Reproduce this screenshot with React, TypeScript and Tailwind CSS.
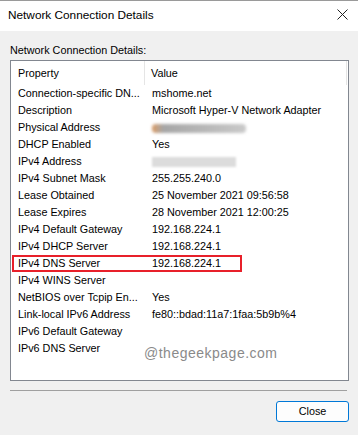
import React from 'react';

const rows: [string, string][] = [
  ['Connection-specific DN...', 'mshome.net'],
  ['Description', 'Microsoft Hyper-V Network Adapter'],
  ['Physical Address', '#blur1'],
  ['DHCP Enabled', 'Yes'],
  ['IPv4 Address', '#blur2'],
  ['IPv4 Subnet Mask', '255.255.240.0'],
  ['Lease Obtained', '25 November 2021 09:56:58'],
  ['Lease Expires', '28 November 2021 12:00:25'],
  ['IPv4 Default Gateway', '192.168.224.1'],
  ['IPv4 DHCP Server', '192.168.224.1'],
  ['IPv4 DNS Server', '192.168.224.1'],
  ['IPv4 WINS Server', ''],
  ['NetBIOS over Tcpip En...', 'Yes'],
  ['Link-local IPv6 Address', 'fe80::bdad:11a7:1faa:5b9b%4'],
  ['IPv6 Default Gateway', ''],
  ['IPv6 DNS Server', ''],
];

function Value({ v }: { v: string }) {
  if (v === '#blur1') {
    return (
      <div className="mt-[1px] h-[9px] w-[94px] rounded-sm bg-gradient-to-r from-[#d99a62] from-0% via-[#a6a6a6] via-12% to-[#c9c9c9] to-100% blur-[1.5px]" />
    );
  }
  if (v === '#blur2') {
    return <div className="h-[10px] w-[84px] bg-[#dcdcdc] blur-[1px]" />;
  }
  return <span>{v}</span>;
}

export default function App() {
  return (
    <div
      className="flex h-[435px] w-[358px] flex-col bg-[#f0f0f0] text-[10.8px] text-black"
      style={{ fontFamily: '"Liberation Sans", Arial, sans-serif' }}
    >
      {/* title bar */}
      <div className="flex h-[31px] items-center justify-between border-t border-[#9a9a9a] bg-white pl-[8px] pr-[10px]">
        <span className="text-[11.8px]">Network Connection Details</span>
        <svg width="11" height="11" viewBox="0 0 11 11" className="mb-[3px]">
          <path d="M0.5 0.5 L10.5 10.5 M10.5 0.5 L0.5 10.5" stroke="#222" strokeWidth="1" />
        </svg>
      </div>

      <div className="flex flex-1 flex-col px-[10px]">
        <div className="pt-[11px] leading-[17px]">Network Connection Details:</div>

        <div className="relative mt-[1px] h-[321px] w-[339px] border border-[#828790] bg-white">
          {/* header */}
          <div className="flex h-[24px] items-center">
            <div className="flex h-full w-[134px] items-center border-r border-[#e5e5e5] pl-[7px]">
              Property
            </div>
            <div className="flex h-full flex-1 items-center pl-[6px]">Value</div>
            <div className="mr-[1px] h-full border-r border-[#e5e5e5]" />
          </div>

          {rows.map(([k, v]) => (
            <div key={k} className="relative flex h-[17px] items-center">
              <div className="w-[141px] truncate pl-[7px]">{k}</div>
              <Value v={v} />
              {k === 'IPv4 DNS Server' && (
                <div className="absolute left-[1px] top-0 h-[17px] w-[230px] border-2 border-[#e8202a]" />
              )}
            </div>
          ))}

          <div className="absolute left-[133px] top-[282px] text-[14px] tracking-[0.5px] text-[#8a8a8a]">
            @thegeekpage.com
          </div>
        </div>

        <div className="mt-[9px] h-[1px] w-[337px] bg-[#a0a0a0]" />

        <div className="mt-[10px] flex justify-end">
          <button className="mr-[-1px] h-[21px] w-[73px] rounded-[3px] border border-[#0078d7] bg-[#fdfdfd] text-[10.8px]">
            Close
          </button>
        </div>
      </div>
    </div>
  );
}
